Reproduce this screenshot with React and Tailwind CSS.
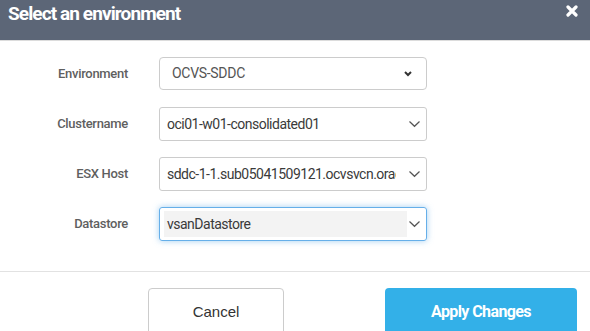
import React from "react";

const ThinChevron = () => (
  <svg width="13" height="8" viewBox="0 0 13 8" fill="none">
    <path d="M1.5 1.5l5 4.8 5-4.8" stroke="#555" strokeWidth="1.2" />
  </svg>
);

const BoldChevron = () => (
  <svg width="8" height="6" viewBox="0 0 8 6" fill="none">
    <path d="M1 1l3 3 3-3" stroke="#333" strokeWidth="2" />
  </svg>
);

const Field = ({ label, children }) => (
  <div className="flex items-center h-[34px]">
    <div className="w-[128px] text-right text-[13px] font-medium text-[#5f5f5f] tracking-[-0.3px]">
      {label}
    </div>
    <div className="ml-[31px] w-[268px] h-full">{children}</div>
  </div>
);

const App = () => {
  return (
    <div
      className="w-[590px] h-[331px] bg-white overflow-hidden"
      style={{ fontFamily: "Roboto, 'Liberation Sans', sans-serif" }}
    >
      <div className="h-[41px] bg-[#5c6677] border-b border-[#dcdcdc] flex items-start justify-between pl-[8px] pr-[12px]">
        <div className="mt-[1px] text-[19px] font-bold text-white tracking-[-0.9px] leading-[26px]">
          Select an environment
        </div>
        <div className="mt-[5px] text-white">
          <svg width="12" height="12" viewBox="0 0 12 12">
            <path d="M2 2l8 8M10 2l-8 8" stroke="#fff" strokeWidth="3.2" strokeLinecap="round" />
          </svg>
        </div>
      </div>

      <div className="flex flex-col gap-[16px] pt-[16px]">
        <Field label="Environment">
          <div className="h-[33px] border border-[#ccc] rounded-[4px] flex items-center justify-between pl-[12px] pr-[14px] text-[14px] text-[#555] tracking-[-0.3px]">
            <span>OCVS-SDDC</span>
            <BoldChevron />
          </div>
        </Field>
        <Field label="Clustername">
          <div className="h-[34px] border border-[#ccc] rounded-[3px] flex items-center justify-between pl-[7px] pr-[5px] text-[14px] text-[#3a3a3a] tracking-[-0.5px]">
            <span>oci01-w01-consolidated01</span>
            <ThinChevron />
          </div>
        </Field>
        <Field label="ESX Host">
          <div className="h-[34px] border border-[#ccc] rounded-[3px] flex items-center justify-between pl-[7px] pr-[5px] text-[14px] text-[#3a3a3a] tracking-[-0.5px]">
            <span className="w-[229px] overflow-hidden whitespace-nowrap">
              sddc-1-1.sub05041509121.ocvsvcn.oraclevcn.com
            </span>
            <ThinChevron />
          </div>
        </Field>
        <Field label="Datastore">
          <div className="h-[34px] border border-[#66afe9] rounded-[3px] shadow-[0_0_6px_rgba(102,175,233,0.6)] flex items-center justify-between pl-[4px] pr-[5px] text-[14px] text-[#3a3a3a] tracking-[-0.5px]">
            <div className="w-[243px] h-[26px] bg-[#f3f3f3] flex items-center pl-[3px]">
              vsanDatastore
            </div>
            <ThinChevron />
          </div>
        </Field>
      </div>

      <div className="mt-[30px] border-t border-[#e2e2e2]" />

      <div className="flex mt-[16px]">
        <button
          className="ml-[148px] w-[136px] h-[48px] border border-[#ccc] rounded-[4px] bg-white text-[15px] text-[#333]"
          style={{ fontFamily: "'Liberation Sans', Arial, sans-serif" }}
        >
          Cancel
        </button>
        <button className="ml-[101px] w-[192px] h-[48px] rounded-[4px] bg-[#33b0e8] text-white text-[16px] font-bold tracking-[-0.6px]">
          Apply Changes
        </button>
      </div>
    </div>
  );
};

export default App;
